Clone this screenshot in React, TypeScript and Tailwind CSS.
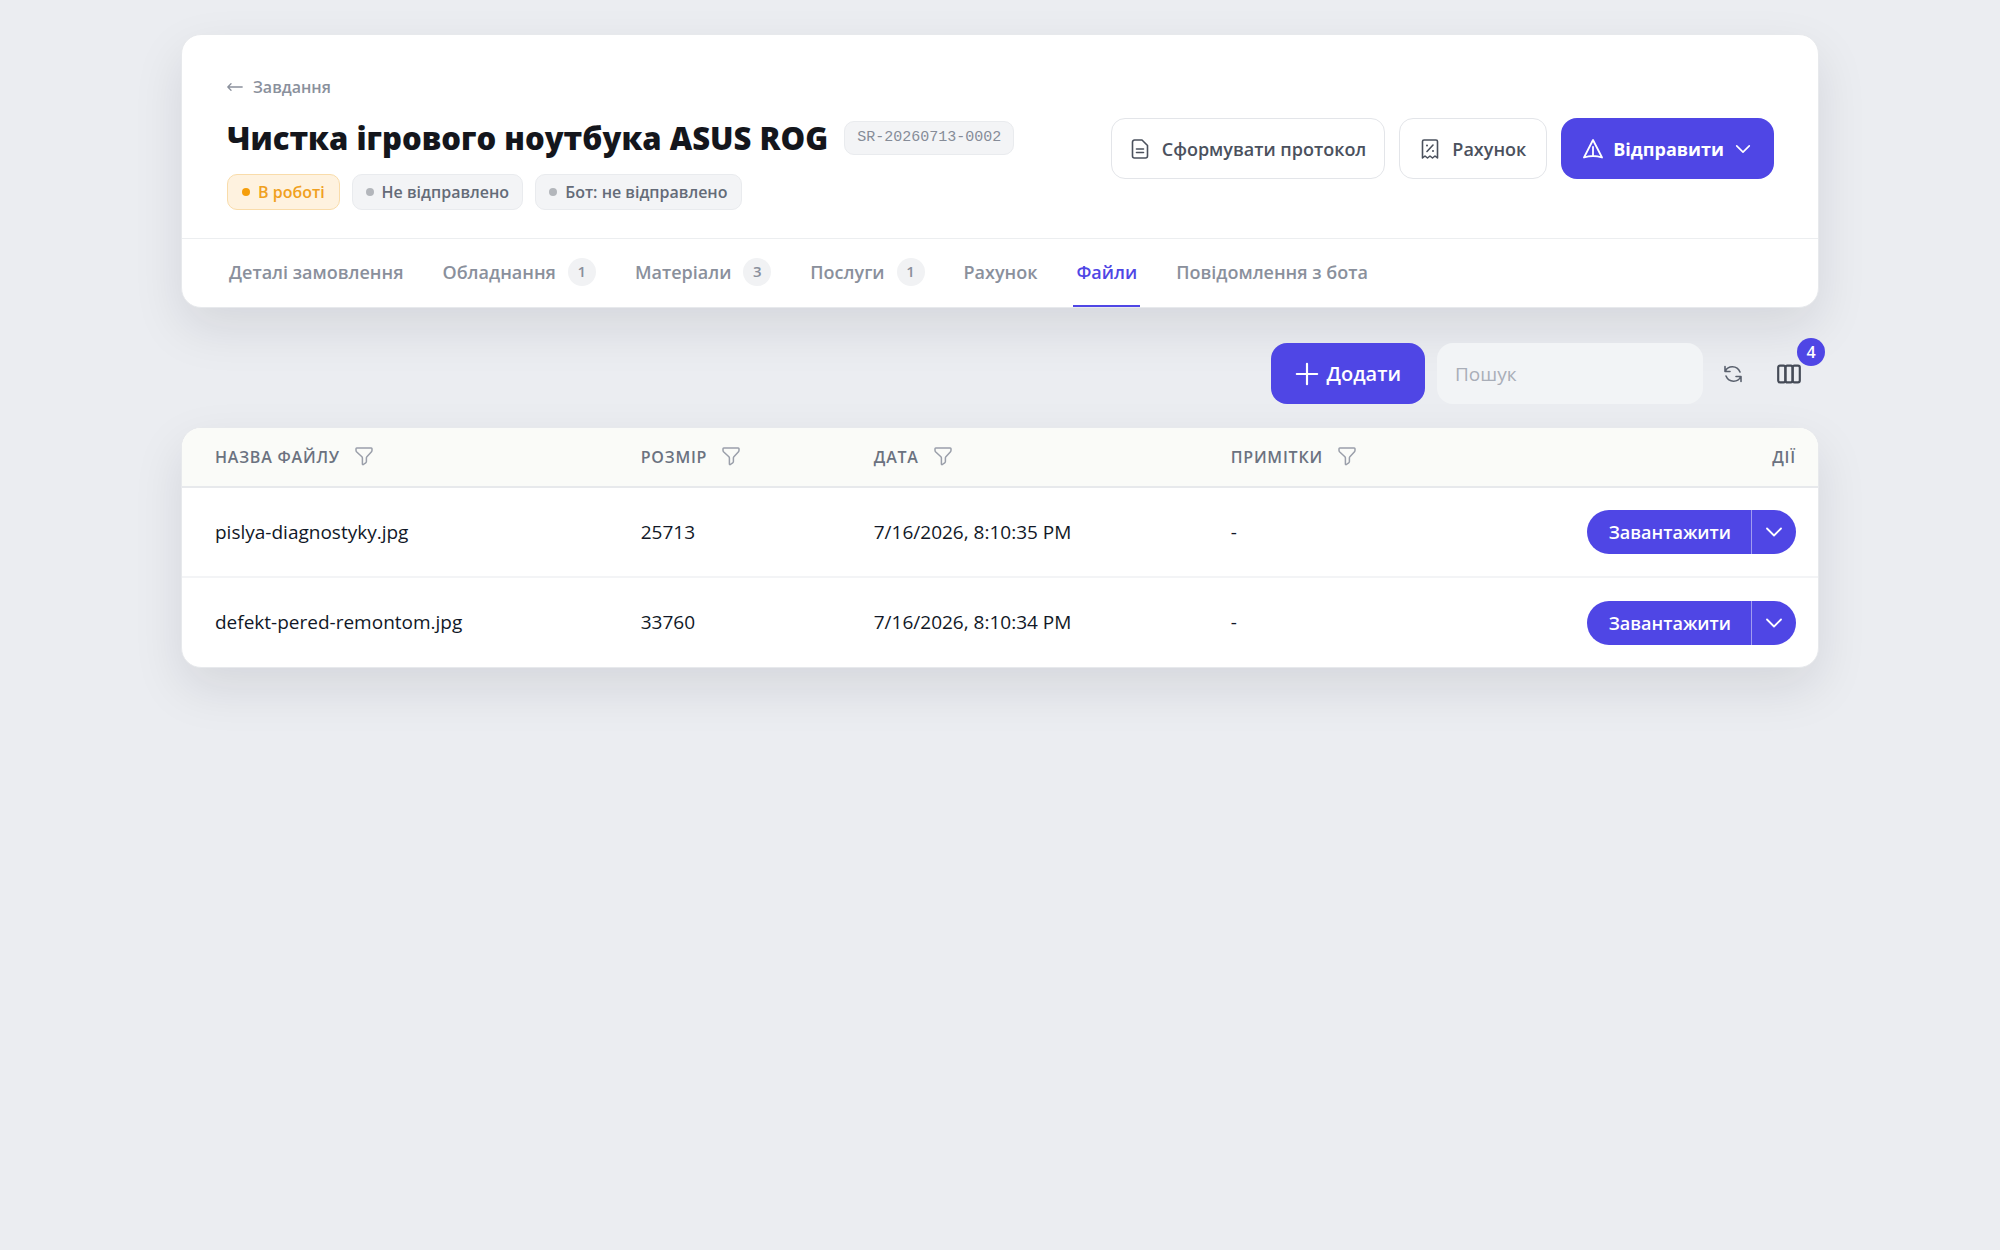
import { ReactNode } from "react"

const tabs = [
  { label: "Деталі замовлення" },
  { label: "Обладнання", count: 1 },
  { label: "Матеріали", count: 3 },
  { label: "Послуги", count: 1 },
  { label: "Рахунок" },
  { label: "Файли", active: true },
  { label: "Повідомлення з бота" },
]

const files = [
  { name: "pislya-diagnostyky.jpg", size: 25713, date: "7/16/2026, 8:10:35 PM", note: "-" },
  { name: "defekt-pered-remontom.jpg", size: 33760, date: "7/16/2026, 8:10:34 PM", note: "-" },
]

const cardClass =
  "rounded-[20px] border border-[#e7e9ec] bg-white shadow-[0_20px_50px_rgba(17,24,39,0.10)]"

type IconProps = {
  className?: string
  strokeWidth?: number
  children: ReactNode
}

const Icon = ({ className = "size-5", strokeWidth = 1.6, children }: IconProps) => (
  <svg
    viewBox="0 0 20 20"
    fill="none"
    stroke="currentColor"
    strokeWidth={strokeWidth}
    strokeLinecap="round"
    strokeLinejoin="round"
    className={`shrink-0 ${className}`}
    aria-hidden="true"
  >
    {children}
  </svg>
)

const ChevronIcon = ({ className }: { className?: string }) => (
  <Icon className={className} strokeWidth={1.8}>
    <path d="M3 6.500 10 13.500l7-7" />
  </Icon>
)

const FilterIcon = () => (
  <Icon className="size-5 text-[#9a9faa]" strokeWidth={1.5}>
    <path d="M2.800 1h14.400a.8.8 0 0 1 .8.8v1.500a2 2 0 0 1-.5 1.400l-4.600 5a2 2 0 0 0-.5 1.300v3.600a1.500 1.500 0 0 1-.7 1.300l-2.300 1.600a.6.6 0 0 1-1-.5v-6a2 2 0 0 0-.5-1.300L2.500 4.700A2 2 0 0 1 2 3.300V1.800a.8.8 0 0 1 .8-.8z" />
  </Icon>
)

type StatusProps = {
  tone?: "amber" | "gray"
  children: ReactNode
}

const Status = ({ tone = "gray", children }: StatusProps) => (
  <span
    className={
      tone === "amber"
        ? "flex h-9 items-center gap-2 rounded-[10px] border border-[#f9dcaa] bg-[#fef2df] px-3.5 text-base font-semibold text-[#f0a020]"
        : "flex h-9 items-center gap-2 rounded-[10px] border border-[#e9ebee] bg-[#f3f4f6] px-[13px] text-base font-semibold text-[#646b78]"
    }
  >
    <span
      className={
        tone === "amber" ? "size-2 rounded-full bg-[#f59e0b]" : "size-2 rounded-full bg-[#b3b6bb]"
      }
    />
    {children}
  </span>
)

const Header = () => (
  <header className={cardClass}>
    <div className="flex items-start justify-between gap-6 border-b border-[#eceef0] pt-10 pr-11 pb-7 pl-[45px]">
      <div>
        <a href="#" className="flex items-center gap-2.5 text-base font-semibold text-[#8a909c]">
          <Icon className="size-4" strokeWidth={1.6}>
            <path d="M1 10h18M5 6l-4 4 4 4" />
          </Icon>
          Завдання
        </a>
        <div className="mt-[15px] flex items-center gap-4">
          <h1 className="text-[31px] leading-[48px] font-extrabold text-[#14161c]">
            Чистка ігрового ноутбука ASUS ROG
          </h1>
          <span className="rounded-[10px] border border-[#e9ebee] bg-[#f3f4f6] px-3 py-1 font-['Liberation_Mono',monospace] text-[15px] leading-6 text-[#868c98]">
            SR-20260713-0002
          </span>
        </div>
        <div className="mt-3 flex gap-3">
          <Status tone="amber">В роботі</Status>
          <Status>Не відправлено</Status>
          <Status>Бот: не відправлено</Status>
        </div>
      </div>
      <div className="mt-[43px] flex gap-3.5">
        <button className="flex h-[61px] items-center gap-3 rounded-[14px] border border-[#e3e5e9] px-[18px] text-lg font-semibold text-[#4b515d]">
          <Icon>
            <path d="M4.500 1H12l5.500 5.500V17a2 2 0 0 1-2 2h-11a2 2 0 0 1-2-2V3a2 2 0 0 1 2-2zM6.500 10h7M6.500 13.500h7" />
          </Icon>
          Сформувати протокол
        </button>
        <button className="flex h-[61px] items-center gap-3 rounded-[14px] border border-[#e3e5e9] px-5 text-lg font-semibold text-[#4b515d]">
          <Icon>
            <path d="M2.500 19V2.500A1.500 1.500 0 0 1 4 1h12a1.500 1.500 0 0 1 1.500 1.500V19L15 17l-2.500 2-2.500-2-2.500 2L5 17zM7 12.500l6-6.500" />
            <path d="M7 6.500h.01M13 12h.01" strokeWidth={2} />
          </Icon>
          Рахунок
        </button>
        <button className="flex h-[61px] items-center gap-2.5 rounded-[16px] bg-[#4f46e5] px-[22px] text-lg font-bold text-white">
          <Icon strokeWidth={1.8}>
            <path d="M10 1 1 18.500q9-3 18 0zM10 8v8" />
          </Icon>
          Відправити
          <ChevronIcon className="size-[18px]" />
        </button>
      </div>
    </div>
    <nav className="flex gap-[33px] px-11">
      {tabs.map((tab) => (
        <a
          key={tab.label}
          href="#"
          className={
            tab.active
              ? "flex h-[68px] items-center gap-3 border-b-2 border-[#4f46e5] px-[3px] text-lg font-semibold text-[#4f46e5]"
              : "flex h-[68px] items-center gap-3 border-b-2 border-transparent px-[3px] text-lg font-semibold text-[#8a909c]"
          }
        >
          {tab.label}
          {tab.count && (
            <span className="flex size-7 items-center justify-center rounded-full bg-[#f1f2f4] text-[15px]">
              {tab.count}
            </span>
          )}
        </a>
      ))}
    </nav>
  </header>
)

const Toolbar = () => (
  <div className="mt-[35px] flex items-center justify-end">
    <button className="flex h-[61px] items-center gap-2 rounded-[16px] bg-[#4f46e5] px-6 text-xl font-semibold text-white">
      <Icon className="size-6" strokeWidth={1.8}>
        <path d="M10 1.500v17M1.500 10h17" />
      </Icon>
      Додати
    </button>
    <input
      type="search"
      placeholder="Пошук"
      aria-label="Пошук"
      className="ml-3 h-[61px] w-[266px] rounded-[16px] bg-[#f2f4f6] px-[18px] text-[19px] text-[#14161c] placeholder:text-[#a9aeb8]"
    />
    <button aria-label="Оновити" className="ml-5 text-[#5a616e]">
      <Icon>
        <path d="M2 2.500v5h5M2.500 7C5 1.500 14 1 17 8M18 17.500v-5h-5M17.500 13C15 18.500 6 19 3 12" />
      </Icon>
    </button>
    <button aria-label="Стовпці" className="relative mr-[18px] ml-[34px] text-[#454b57]">
      <Icon className="size-6" strokeWidth={1.8}>
        <rect x="1" y="3" width="6" height="14" rx="1.500" />
        <rect x="7" y="3" width="6" height="14" rx="1.500" />
        <rect x="13" y="3" width="6" height="14" rx="1.500" />
      </Icon>
      <span className="absolute -top-6 -right-6 flex size-7 items-center justify-center rounded-full bg-[#4f46e5] text-base font-semibold text-white">
        4
      </span>
    </button>
  </div>
)

const FilesTable = () => (
  <div className={`mt-[23px] overflow-hidden ${cardClass}`}>
    <table className="w-full table-fixed text-left">
      <thead className="bg-[#fafbf8] text-base text-[#6b7280] uppercase">
        <tr className="h-[59px] border-b-2 border-[#e7e9ec]">
          <th className="w-[27%] pl-[33px] font-semibold">
            <span className="flex items-center gap-3.5 tracking-wider">
              Назва файлу <FilterIcon />
            </span>
          </th>
          <th className="w-[14%] pl-[17px] font-semibold">
            <span className="flex items-center gap-3.5 tracking-wider">
              Розмір <FilterIcon />
            </span>
          </th>
          <th className="w-[22%] pl-[21px] font-semibold">
            <span className="flex items-center gap-3.5 tracking-wider">
              Дата <FilterIcon />
            </span>
          </th>
          <th className="pl-[18px] font-semibold">
            <span className="flex items-center gap-3.5 tracking-wider">
              Примітки <FilterIcon />
            </span>
          </th>
          <th className="w-[17%] pr-[22px] text-right font-semibold tracking-wider">Дії</th>
        </tr>
      </thead>
      <tbody className="text-[19px] text-[#111827]">
        {files.map((file) => (
          <tr key={file.name} className="h-[90px] border-b-2 border-[#f3f4f6] last:border-b-0">
            <td className="pl-[33px]">{file.name}</td>
            <td className="pl-[17px]">{file.size}</td>
            <td className="pl-[21px]">{file.date}</td>
            <td className="pl-[18px]">{file.note}</td>
            <td className="pr-[22px]">
              <div className="flex justify-end text-lg font-semibold text-white">
                <button className="h-11 rounded-l-full bg-[#4f46e5] pr-5 pl-[22px]">
                  Завантажити
                </button>
                <button
                  aria-label="Більше дій"
                  className="h-11 rounded-r-full border-l border-[#a09bf1] bg-[#4f46e5] px-3"
                >
                  <ChevronIcon className="size-5" />
                </button>
              </div>
            </td>
          </tr>
        ))}
      </tbody>
    </table>
  </div>
)

const App = () => {
  return (
    <div className="min-h-screen bg-[#ebedf1] pt-[34px] pb-10 font-['Open_Sans',sans-serif]">
      <main className="mx-auto w-full max-w-[1638px]">
        <Header />
        <Toolbar />
        <FilesTable />
      </main>
    </div>
  )
}

export default App
